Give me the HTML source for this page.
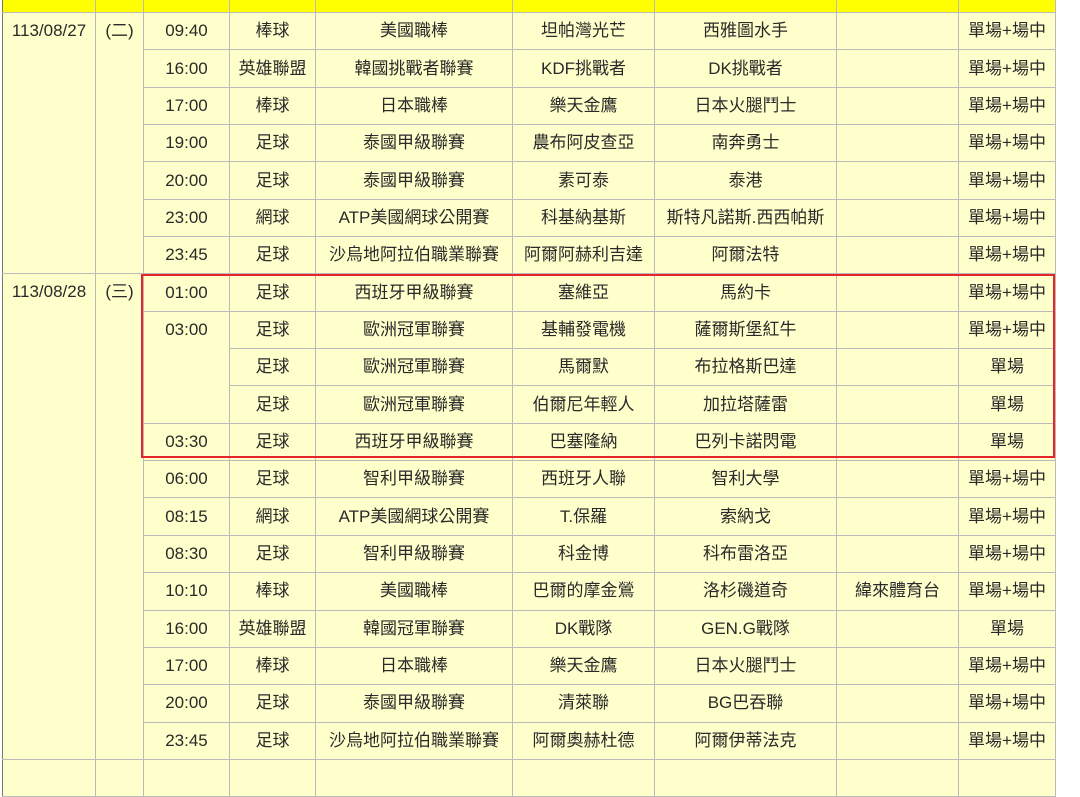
<!DOCTYPE html>
<html><head><meta charset="utf-8"><style>
html,body{margin:0;padding:0;background:#fff;width:1080px;height:766px;overflow:hidden}
body{font-family:"Liberation Sans","Noto Sans CJK TC",sans-serif;font-size:17px;color:#2a2a2a}
table{position:absolute;left:2px;top:-26px;border-collapse:collapse;table-layout:fixed;width:1054px;background:#ffffcc}
td{border:1px solid #bbb;text-align:center;padding:0;white-space:nowrap;overflow:hidden;line-height:20px}
tr{height:37.35px}
tr.h td{background:#ffff00;height:37px}
td.d{vertical-align:top;padding-top:8px;border-left:1px solid #777}
td.w{vertical-align:top;padding-top:8px}
td.t{vertical-align:top;padding-top:8px}
#red{position:absolute;left:141px;top:274px;width:910px;height:180px;border:2px solid #e5242b}
</style></head><body>
<table>
<colgroup><col style="width:93px"><col style="width:48px"><col style="width:86px"><col style="width:86px"><col style="width:197px"><col style="width:142px"><col style="width:182px"><col style="width:122px"><col style="width:97px"></colgroup>
<tr class="h"><td style="border-left:1px solid #777"></td><td></td><td></td><td></td><td></td><td></td><td></td><td></td><td></td></tr>
<tr><td class="d" rowspan="7">113/08/27</td><td class="w" rowspan="7">(二)</td><td>09:40</td><td>棒球</td><td>美國職棒</td><td>坦帕灣光芒</td><td>西雅圖水手</td><td></td><td>單場+場中</td></tr>
<tr><td>16:00</td><td>英雄聯盟</td><td>韓國挑戰者聯賽</td><td>KDF挑戰者</td><td>DK挑戰者</td><td></td><td>單場+場中</td></tr>
<tr><td>17:00</td><td>棒球</td><td>日本職棒</td><td>樂天金鷹</td><td>日本火腿鬥士</td><td></td><td>單場+場中</td></tr>
<tr><td>19:00</td><td>足球</td><td>泰國甲級聯賽</td><td>農布阿皮查亞</td><td>南奔勇士</td><td></td><td>單場+場中</td></tr>
<tr><td>20:00</td><td>足球</td><td>泰國甲級聯賽</td><td>素可泰</td><td>泰港</td><td></td><td>單場+場中</td></tr>
<tr><td>23:00</td><td>網球</td><td>ATP美國網球公開賽</td><td>科基納基斯</td><td>斯特凡諾斯.西西帕斯</td><td></td><td>單場+場中</td></tr>
<tr><td>23:45</td><td>足球</td><td>沙烏地阿拉伯職業聯賽</td><td>阿爾阿赫利吉達</td><td>阿爾法特</td><td></td><td>單場+場中</td></tr>
<tr><td class="d" rowspan="13">113/08/28</td><td class="w" rowspan="13">(三)</td><td>01:00</td><td>足球</td><td>西班牙甲級聯賽</td><td>塞維亞</td><td>馬約卡</td><td></td><td>單場+場中</td></tr>
<tr><td class="t" rowspan="3">03:00</td><td>足球</td><td>歐洲冠軍聯賽</td><td>基輔發電機</td><td>薩爾斯堡紅牛</td><td></td><td>單場+場中</td></tr>
<tr><td>足球</td><td>歐洲冠軍聯賽</td><td>馬爾默</td><td>布拉格斯巴達</td><td></td><td>單場</td></tr>
<tr><td>足球</td><td>歐洲冠軍聯賽</td><td>伯爾尼年輕人</td><td>加拉塔薩雷</td><td></td><td>單場</td></tr>
<tr><td>03:30</td><td>足球</td><td>西班牙甲級聯賽</td><td>巴塞隆納</td><td>巴列卡諾閃電</td><td></td><td>單場</td></tr>
<tr><td>06:00</td><td>足球</td><td>智利甲級聯賽</td><td>西班牙人聯</td><td>智利大學</td><td></td><td>單場+場中</td></tr>
<tr><td>08:15</td><td>網球</td><td>ATP美國網球公開賽</td><td>T.保羅</td><td>索納戈</td><td></td><td>單場+場中</td></tr>
<tr><td>08:30</td><td>足球</td><td>智利甲級聯賽</td><td>科金博</td><td>科布雷洛亞</td><td></td><td>單場+場中</td></tr>
<tr><td>10:10</td><td>棒球</td><td>美國職棒</td><td>巴爾的摩金鶯</td><td>洛杉磯道奇</td><td>緯來體育台</td><td>單場+場中</td></tr>
<tr><td>16:00</td><td>英雄聯盟</td><td>韓國冠軍聯賽</td><td>DK戰隊</td><td>GEN.G戰隊</td><td></td><td>單場</td></tr>
<tr><td>17:00</td><td>棒球</td><td>日本職棒</td><td>樂天金鷹</td><td>日本火腿鬥士</td><td></td><td>單場+場中</td></tr>
<tr><td>20:00</td><td>足球</td><td>泰國甲級聯賽</td><td>清萊聯</td><td>BG巴吞聯</td><td></td><td>單場+場中</td></tr>
<tr><td>23:45</td><td>足球</td><td>沙烏地阿拉伯職業聯賽</td><td>阿爾奧赫杜德</td><td>阿爾伊蒂法克</td><td></td><td>單場+場中</td></tr>
<tr><td style="border-left:1px solid #777"></td><td></td><td></td><td></td><td></td><td></td><td></td><td></td><td></td></tr>
</table>
<div id="red"></div>
</body></html>
